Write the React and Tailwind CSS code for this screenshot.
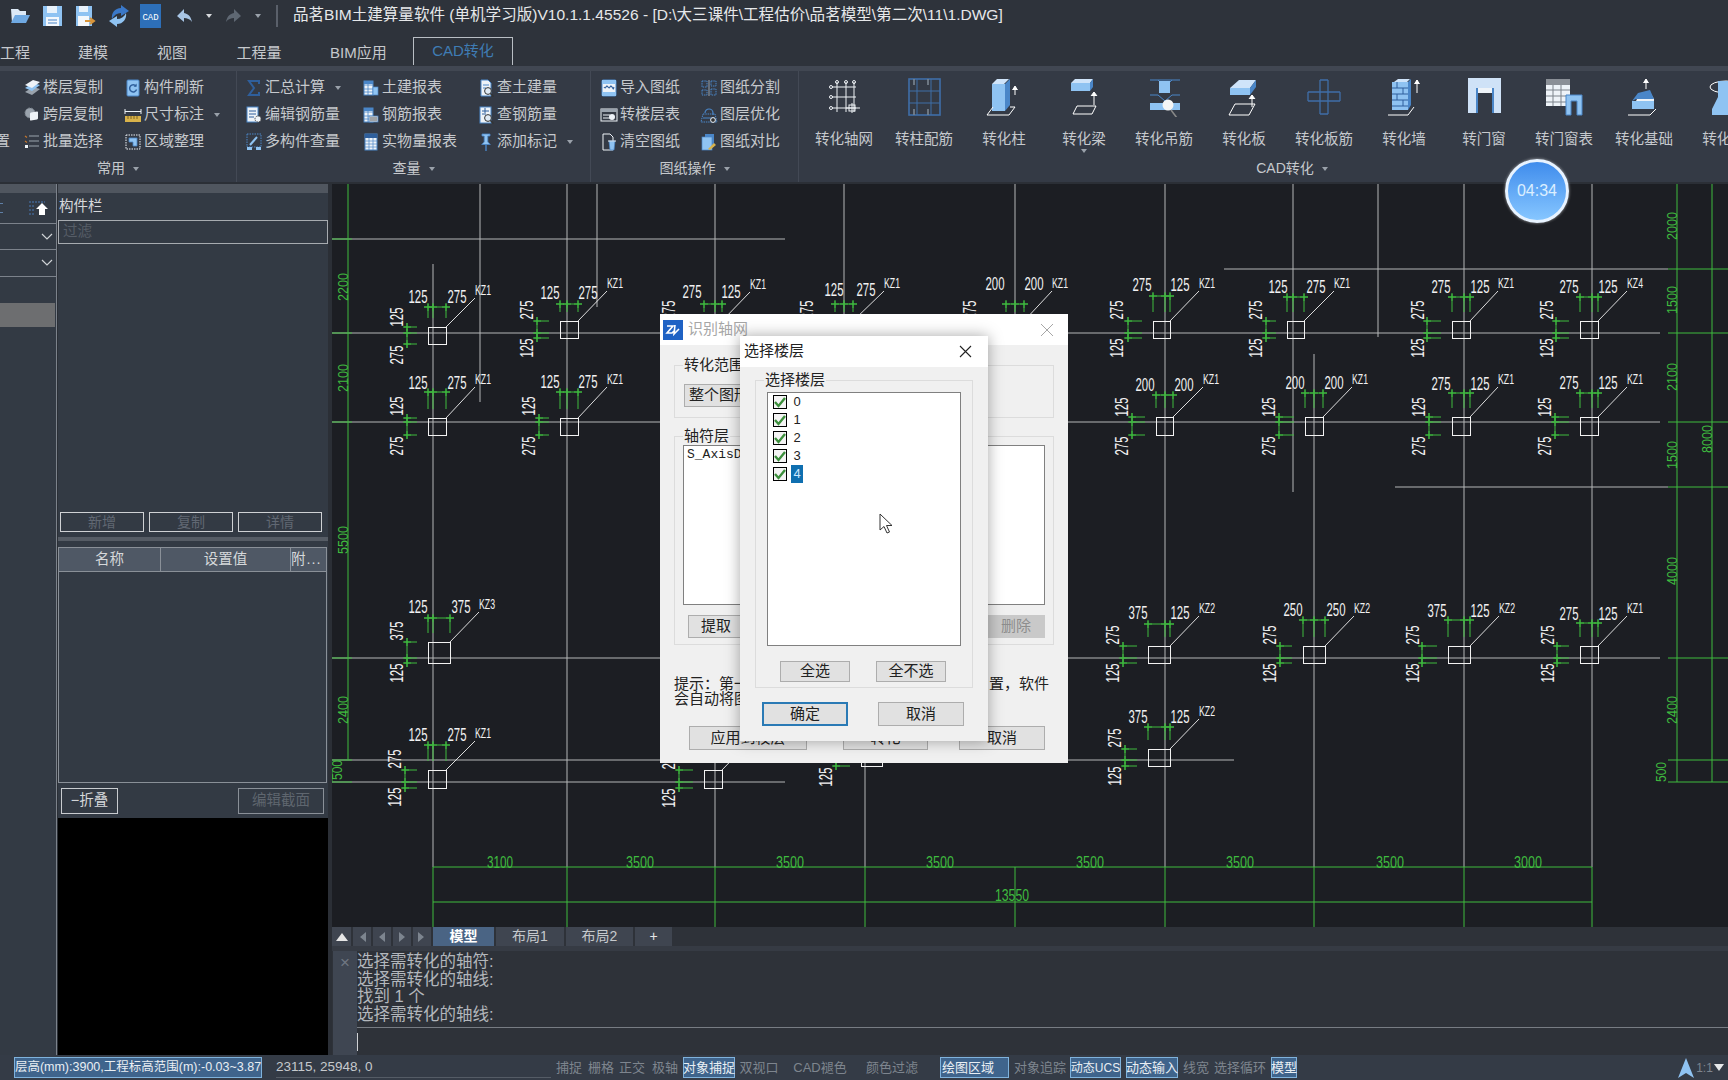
import React from "react";

/* ---------- small ribbon icons (18x18) ---------- */
const S = ({ children }) => (
  <svg width="18" height="18" viewBox="0 0 18 18" className="shrink-0">{children}</svg>
);
const L = "#8fc3f2", M = "#4a86c8", D = "#2f5f9c", W = "#eef3f8", Y = "#d8b24a", G = "#9aa3ad";
const Doc = () => <path d="M4 1h7l3 3v13H4z" fill={W} stroke={M} strokeWidth="1" />;
const Mag = () => (<g><circle cx="11" cy="12" r="3.4" fill="#dfeaf5" stroke="#333" strokeWidth="1" /><path d="M13.5 14.5l3 3" stroke="#333" strokeWidth="1.5" /></g>);
const Tbl = () => (<g><rect x="2" y="2" width="9" height="14" fill={W} stroke={M} /><path d="M2 6h9M2 10h9M2 13h9M6 2v14" stroke={M} strokeWidth=".8" /><rect x="2" y="2" width="9" height="3" fill={M} /></g>);
const icons = {
  floorCopy: <g><path d="M2 13l8-5 7 2-8 6z" fill={G} /><path d="M2 9l8-5 7 2-8 6z" fill={L} /><path d="M2 6l8-5 7 2-8 6z" fill={W} /></g>,
  refresh: <g><rect x="3" y="1" width="12" height="16" rx="1" fill={L} stroke={M} /><path d="M12 7a3.6 3.6 0 1 0 .6 3.6" fill="none" stroke={D} strokeWidth="1.5" /><path d="M12.6 4.5v3.2H9.6z" fill={D} /></g>,
  crossCopy: <g><circle cx="7" cy="7" r="5" fill={G} stroke="#7a828c" strokeDasharray="2 1" /><rect x="7" y="8" width="8" height="8" rx="1" fill={W} transform="skewY(-10)" /></g>,
  dim: <g><path d="M1 3v5M17 3v5M1 5.5h16" stroke={W} strokeWidth="1" /><rect x="1" y="10" width="16" height="6" fill={Y} /><path d="M4 10v3M7 10v3M10 10v3M13 10v3" stroke="#6b5218" strokeWidth=".8" /></g>,
  batch: <g><path d="M6 3h10M6 8h10M6 13h10" stroke={G} strokeWidth="1.2" /><path d="M2 3l2 1.5M2 8l2 1.5" stroke="#c4762e" strokeWidth="1.2" /><rect x="2" y="12" width="3" height="3" fill={W} /></g>,
  area: <g><rect x="2" y="2" width="14" height="14" fill="none" stroke={W} strokeDasharray="1.5 1" /><path d="M5 5h8v8h-4V9H5z" fill={L} stroke={M} strokeWidth=".8" /></g>,
  sum: <path d="M14 5V2H4l5 7-5 7h10v-3" fill="none" stroke={D} strokeWidth="2" />,
  editRebar: <g><rect x="2" y="1" width="11" height="15" fill={W} stroke={M} /><path d="M4 5h7M4 8h7M4 11h5" stroke={D} /><circle cx="13" cy="13" r="3" fill={W} stroke="#444" strokeDasharray="1.4 .8" /></g>,
  civilReport: <g><Tbl /><rect x="11" y="8" width="5" height="8" fill={L} stroke={M} strokeWidth=".7" /></g>,
  query: <g><Doc /><path d="M6 6h6M6 9h3" stroke={M} /><Mag /></g>,
  rebarReport: <g><Tbl /><rect x="7" y="10" width="9" height="6" fill="#c8ccd2" stroke={M} strokeWidth=".7" /><path d="M8 12h7M8 14h7" stroke="#555" strokeWidth=".7" /></g>,
  queryRebar: <g><rect x="3" y="1" width="11" height="16" fill={W} stroke={M} /><path d="M5 5h7M5 8h4M8 2v5" stroke={D} /><Mag /></g>,
  multi: <g><rect x="2" y="1" width="14" height="13" fill="none" stroke={M} strokeDasharray="1.5 1" /><path d="M5 12l7-8" stroke={L} strokeWidth="2" /><rect x="2" y="14" width="5" height="3" fill={L} /><rect x="11" y="14" width="5" height="3" fill={L} /></g>,
  realReport: <g><rect x="3" y="1" width="12" height="16" fill={W} stroke={M} /><rect x="3" y="1" width="12" height="4" fill={D} /><path d="M3 8h12M3 11h12M3 14h12M7 5v12M11 5v12" stroke={M} strokeWidth=".7" /></g>,
  pin: <g><path d="M5 1h8v2h-2.2v6l2.5 2.5H4.7L7.2 9V3H5z" fill={L} stroke={M} strokeWidth=".8" /><path d="M9 11v7" stroke={M} strokeWidth="1.4" /></g>,
  importDwg: <g><rect x="2" y="1" width="14" height="16" rx="1" fill={W} stroke={M} /><rect x="2" y="1" width="14" height="4" fill={L} /><path d="M4 8c2 3 2-3 4 0s2-3 4 0 1 2 2 0" fill="none" stroke={D} strokeWidth="1.2" /><rect x="2" y="13" width="14" height="4" fill={L} /></g>,
  toFloor: <g><rect x="1" y="3" width="16" height="12" fill="none" stroke={W} /><rect x="1" y="3" width="16" height="3" fill={G} /><path d="M3 9h7M3 12h7" stroke={W} /><circle cx="12" cy="11" r="3" fill={W} /></g>,
  clear: <g><path d="M3 1h7l3 3v13H3z" fill="none" stroke={W} /><path d="M9 8h6l-1 9H10z" fill={L} stroke={M} strokeWidth=".7" /><path d="M8 8h8" stroke={W} /></g>,
  split: <g><path d="M2 2h5v6H2zM11 2h5v5h-5zM2 11h5v5H2zM11 10h5v6h-5z" fill="none" stroke={M} strokeDasharray="1.5 .8" /><path d="M9 1v16" stroke={G} /></g>,
  layer: <g><path d="M5 7a4 4 0 0 1 8 0v2" fill="none" stroke={M} strokeWidth="1.2" /><path d="M3 8h12l2 8H1z" fill="none" stroke={M} strokeDasharray="1.5 .8" /><path d="M3 12h12" stroke={M} /><circle cx="13" cy="14" r="2.4" fill="#333" stroke={W} /></g>,
  compare: <g><rect x="5" y="1" width="9" height="13" fill={M} /><rect x="2" y="4" width="10" height="13" fill={L} stroke={M} strokeWidth=".7" /><path d="M8 16l6-6 2 2-6 5z" fill={Y} /></g>,
};
const Ic = ({ k }) => <S>{icons[k]}</S>;

/* ---------- large ribbon icons (40x40) ---------- */
const big = {
  grid: <g stroke="#eef2f6" fill="none"><path d="M8 10h24M8 20h24M8 31h24M13 5v30M22 5v30M30 5v30" /><circle cx="13" cy="5" r="1.5" /><circle cx="22" cy="5" r="1.5" /><circle cx="30" cy="5" r="1.5" /><circle cx="7" cy="10" r="1.5" /><circle cx="7" cy="20" r="1.5" /><circle cx="7" cy="31" r="1.5" /><rect x="25" y="28" width="6" height="6" /><path d="M22 31h14M28 26v10" /></g>,
  colRebar: <g fill="none" stroke="#3f6ea8" strokeWidth="1.6"><rect x="5" y="2" width="31" height="36" /><path d="M5 14h31M5 26h31M13 2v36M27 2v36" strokeWidth="1" /><path d="M10 2v6M24 2v6M10 38v-6M24 38v-6" stroke="#7c8792" /></g>,
  col: <g><path d="M8 7l5-5h12l-5 5z" fill="#cfe4fa" /><rect x="8" y="7" width="13" height="27" fill={L} /><path d="M21 7l5-5v26l-5 6z" fill={M} /><path d="M31 18v-8M28.5 13l2.5-4 2.5 4" stroke="#fff" fill="#fff" /><path d="M3 38h22l6-8H26" fill="none" stroke="#fff" /><path d="M3 38l6-8" stroke="#fff" /></g>,
  beam: <g><path d="M7 6l4-4h18l-3 4z" fill="#cfe4fa" /><rect x="7" y="6" width="19" height="8" fill={L} /><path d="M26 6l3-4v8l-3 4z" fill={M} /><path d="M30 28V16M27 19l3-4 3 4" stroke="#fff" fill="#fff" /><path d="M9 37l4-8h19l-4 8z" fill="none" stroke="#fff" /></g>,
  hanger: <g><path d="M6 3h30M14 3l4 4M28 3l-4 4" stroke="#4a86c8" fill="none" /><rect x="15" y="4" width="11" height="12" fill={L} /><path d="M6 18h8l7 6 7-6h8" stroke="#4a86c8" fill="none" /><rect x="6" y="26" width="30" height="7" fill={L} /><circle cx="24" cy="28" r="5.5" fill="#f5f5f5" /><path d="M27 33l6 8" stroke="#888" strokeWidth="1.6" /></g>,
  slab: <g><path d="M6 11l9-8h17l-6 8z" fill="#cfe4fa" /><path d="M6 11h20v7H6z" fill={L} /><path d="M26 11l6-8v7l-6 8z" fill={M} /><path d="M28 30V18M25 22l3-4 3 4" stroke="#fff" fill="#fff" /><path d="M5 38l6-11h20l-6 11z" fill="none" stroke="#fff" /></g>,
  slabRebar: <g fill="none" stroke="#3f6ea8" strokeWidth="1.3"><path d="M16 3v34M24 3v34M4 15h32M4 24h32" /><path d="M16 3h8M16 37h8M4 15v9M36 15v9" /></g>,
  wall: <g><path d="M10 5l4-3h12l-3 3z" fill="#cfe4fa" /><rect x="8" y="5" width="16" height="28" fill={L} /><path d="M8 11h16M8 17h16M8 23h16M8 29h16M13 5v6M19 11v6M13 17v6M19 23v6" stroke={D} strokeWidth="1" /><path d="M24 5l3-3v26l-3 5z" fill={M} /><path d="M33 16V3M30.5 7L33 3l2.5 4" stroke="#fff" fill="#fff" /><path d="M4 38h20l6-8" fill="none" stroke="#fff" /></g>,
  door: <g><path d="M4 1h33v35h-8V11H13v25H4z" fill="#cfe2f7" /><path d="M13 11h16v5H13z" fill={W} /><path d="M13 11v25M29 11v25" stroke={M} strokeWidth="2" /></g>,
  doorTable: <g><rect x="2" y="2" width="24" height="27" fill={W} /><rect x="2" y="2" width="24" height="6" fill="#8a8f96" /><path d="M2 13h24M2 19h24M2 25h24M9 8v21M17 8v21" stroke="#7d838b" /><path d="M22 18h16v20h-5V24h-6v14h-5z" fill={L} stroke={M} /></g>,
  found: <g><path d="M10 28l5-10 10-4 5 8v8H10z" fill={W} /><path d="M8 24l6-8 12-3 4 9H12z" fill={M} /><rect x="8" y="24" width="22" height="8" fill={L} /><path d="M22 12V2M19.5 6L22 2l2.5 4" stroke="#fff" fill="#fff" /><path d="M4 38h22l6-6" fill="none" stroke="#fff" /></g>,
  other: <g><ellipse cx="22" cy="10" rx="16" ry="6" fill="none" stroke="#fff" /><path d="M14 4h16v16l6 12v6H8v-6l6-12z" fill={L} /></g>,
};

/* ---------- CAD drawing data (page coordinates) ---------- */
const cols = [
  [428,327,18,17,433,333,307,407,397,"125",418,297,"275",457,297,"KZ1",483,290,"125",317,"275",355],
  [560,321,18,17,567,333,304,537,527,"125",550,293,"275",588,293,"KZ1",615,283,"275",310,"125",348],
  [428,418,18,17,433,422,392,407,397,"125",418,383,"275",457,383,"KZ1",483,379,"125",406,"275",446],
  [560,418,18,17,567,422,392,539,529,"125",550,382,"275",588,382,"KZ1",615,379,"125",406,"275",446],
  [428,642,22,21,433,658,618,407,397,"125",418,607,"375",461,607,"KZ3",487,604,"375",631,"125",673],
  [428,770,18,18,433,782,745,405,395,"125",418,735,"275",457,735,"KZ1",483,733,"275",759,"125",797],
  [704,770,18,18,715,782,745,679,669,"275",692,735,"125",731,735,"KZ1",758,733,"275",760,"125",798],
  [861,745,21,21,865,760,725,836,826,"125",853,715,"275",892,715,"KZ1",918,708,"275",738,"125",777],
  [704,321,18,17,715,333,304,679,669,"275",692,292,"125",731,292,"KZ1",758,284,"275",310,"125",348],
  [835,321,18,17,844,333,304,817,807,"125",834,290,"275",866,290,"KZ1",892,283,"275",310,"125",348],
  [1006,321,18,17,1015,333,304,980,970,"200",995,284,"200",1034,284,"KZ1",1060,283,"275",310,"125",348],
  [1153,321,17,17,1165,333,296,1128,1117,"275",1142,285,"125",1180,285,"KZ1",1207,283,"275",310,"125",348],
  [1287,321,17,17,1293,333,297,1266,1256,"125",1278,287,"275",1316,287,"KZ1",1342,283,"275",310,"125",348],
  [1452,321,18,17,1464,333,297,1427,1418,"275",1441,287,"125",1480,287,"KZ1",1506,283,"275",310,"125",348],
  [1580,321,18,17,1592,333,297,1556,1547,"275",1569,287,"125",1608,287,"KZ4",1635,283,"275",310,"125",348],
  [1156,417,17,18,1165,422,395,1132,1122,"200",1145,385,"200",1184,385,"KZ1",1211,379,"125",407,"275",446],
  [1305,417,18,18,1314,422,393,1279,1269,"200",1295,383,"200",1334,383,"KZ1",1360,379,"125",407,"275",446],
  [1452,417,18,18,1464,422,393,1429,1419,"275",1441,384,"125",1480,384,"KZ1",1506,379,"125",407,"275",446],
  [1580,417,18,18,1592,422,393,1555,1545,"275",1569,383,"125",1608,383,"KZ1",1635,379,"125",407,"275",446],
  [1148,646,22,17,1165,658,624,1123,1113,"375",1138,613,"125",1180,613,"KZ2",1207,608,"275",635,"125",673],
  [1303,646,22,17,1314,658,620,1280,1270,"250",1293,610,"250",1336,610,"KZ2",1362,608,"275",635,"125",673],
  [1448,646,22,17,1464,658,620,1422,1413,"375",1437,611,"125",1480,611,"KZ2",1507,608,"275",635,"125",673],
  [1580,646,18,17,1592,658,623,1557,1548,"275",1569,614,"125",1608,614,"KZ1",1635,608,"275",635,"125",673],
  [1148,749,22,17,1165,760,727,1125,1115,"375",1138,717,"125",1180,717,"KZ2",1207,711,"275",738,"125",776],
];
const GREEN = "#3fbb3f";
const TXT = ({ x, y, len, size, fill, rot, children }) => (
  <text x={x} y={y} textAnchor="middle" dominantBaseline="central" textLength={len} lengthAdjust="spacingAndGlyphs"
    fontSize={size} fill={fill} fontFamily="Liberation Sans, sans-serif" transform={rot ? `rotate(-90 ${x} ${y})` : undefined}>{children}</text>
);
const Tick = ({ x, y }) => <path d={`M${x - 4} ${y}h8M${x} ${y - 4}v8`} stroke={GREEN} strokeWidth="1" />;

function Column({ d }) {
  const [sx, sy, sw, sh, ax, ay, ty, lx, ltx, t1, t1x, t1y, t2, t2x, t2y, kz, kx, ky, l1, l1y, l2, l2y] = d;
  const xs = [sx, ax, sx + sw], ys = [sy, ay, sy + sh];
  return (
    <g>
      <path d={`M${sx - 4} ${ty}H${sx + sw + 4}`} stroke={GREEN} />
      {xs.map((x) => <path key={x} d={`M${x} ${ty - 3}V${sy - 9}`} stroke={GREEN} />)}
      {xs.map((x) => <Tick key={x} x={x} y={ty} />)}
      <path d={`M${lx} ${sy - 4}V${sy + sh + 4}`} stroke={GREEN} />
      {ys.map((y) => <path key={y} d={`M${lx - 3} ${y}H${sx - 11}`} stroke={GREEN} />)}
      {ys.map((y) => <Tick key={y} x={lx} y={y} />)}
      <rect x={sx + 0.5} y={sy + 0.5} width={sw} height={sh} fill="none" stroke="#f2f2f2" strokeWidth="1" />
      <path d={`M${sx + sw} ${sy}L${kx - 8} ${ky + 8}`} stroke="#f2f2f2" strokeWidth=".9" />
      <TXT x={t1x} y={t1y} len={19} size={18} fill="#f2f2f2">{t1}</TXT>
      <TXT x={t2x} y={t2y} len={19} size={18} fill="#f2f2f2">{t2}</TXT>
      <TXT x={kx} y={ky} len={16} size={14} fill="#f2f2f2">{kz}</TXT>
      <TXT x={ltx} y={l1y} len={19} size={18} fill="#f2f2f2" rot>{l1}</TXT>
      <TXT x={ltx} y={l2y} len={19} size={18} fill="#f2f2f2" rot>{l2}</TXT>
    </g>
  );
}

function Drawing() {
  const gray = ["M332 239H785","M332 333H1660","M332 422H1660","M332 658H1660","M332 760H1234","M332 782H785","M1224 269H1668","M1395 487H1668",
    "M433 264V867","M480 184V402","M567 184V867","M597 184V307","M715 184V867","M844 184V400","M865 740V867","M1015 184V400","M1165 184V867","M1293 184V492","M1314 354V867","M1378 184V337","M1464 184V867","M1592 184V867"];
  const greens = ["M348 184V760","M1677 184V782","M1712 184V782","M433 867H1592","M433 902H1592",
    "M433 867V927","M567 867V927","M715 867V927","M865 867V927","M1015 867V927","M1165 867V927","M1314 867V927","M1464 867V927","M1592 867V927",
    "M332 239H352","M332 333H352","M332 422H352","M332 658H352","M332 760H352","M332 782H352","M332 770V782",
    "M1668 269H1728","M1668 333H1728","M1668 422H1728","M1668 487H1728","M1668 658H1728","M1668 760H1728","M1668 782H1728"];
  const hDims = [["3100",500,862,26],["3500",640,862,28],["3500",790,862,28],["3500",940,862,28],["3500",1090,862,28],["3500",1240,862,28],["3500",1390,862,28],["3000",1528,862,28],["13550",1012,895,34]];
  const vDims = [["2200",342,287],["2100",342,378],["5500",342,540],["2400",342,710],["2000",1671,226],["1500",1671,300],["2100",1671,377],["1500",1671,455],["4000",1671,571],["2400",1671,710],["8000",1706,439]];
  return (
    <svg viewBox="332 184 1396 743" width="1396" height="743" className="block shrink-0">
      <rect x="332" y="184" width="1396" height="743" fill="#1c1e23" />
      {gray.map((p) => <path key={p} d={p} stroke="#b4b6b8" strokeWidth="1" fill="none" />)}
      {greens.map((p) => <path key={p} d={p} stroke={GREEN} strokeWidth="1" fill="none" />)}
      {hDims.map(([t, x, y, l]) => <TXT key={x} x={x} y={y} len={l} size={16} fill={GREEN}>{t}</TXT>)}
      {vDims.map(([t, x, y]) => <TXT key={x + "" + y} x={x} y={y} len={28} size={15} fill={GREEN} rot>{t}</TXT>)}
      <TXT x={1660} y={772} len={20} size={15} fill={GREEN} rot>500</TXT>
      <TXT x={336} y={770} len={20} size={15} fill={GREEN} rot>500</TXT>
      {cols.map((d, i) => <Column key={i} d={d} />)}
    </svg>
  );
}

/* ---------- ribbon ---------- */
const Caret = ({ cls = "" }) => <span className={"inline-block w-0 h-0 border-x-[3px] border-x-transparent border-t-[4px] border-t-[#9aa1aa] " + cls} />;

function Item({ k, t, caret }) {
  return (
    <div className="h-[27px] flex items-center whitespace-nowrap text-[15px] text-[#c6c9cd]">
      <span className="w-[20px] flex justify-start"><Ic k={k} /></span>
      <span>{t}</span>
      {caret && <Caret cls="ml-[10px]" />}
    </div>
  );
}
const Foot = ({ children }) => (
  <div className="h-[27px] flex items-center justify-center gap-[8px] text-[14px] text-[#c6c9cd]">
    {children}<Caret />
  </div>
);
const bigs = [["grid","转化轴网"],["colRebar","转柱配筋"],["col","转化柱"],["beam","转化梁"],["hanger","转化吊筋"],["slab","转化板"],["slabRebar","转化板筋"],["wall","转化墙"],["door","转门窗"],["doorTable","转门窗表"],["found","转化基础"],["other","转化…"]];

function Ribbon() {
  return (
    <div className="h-[113px] shrink-0 flex bg-[#343a45] border-b-[2px] border-[#2b2f36] overflow-hidden">
      <section className="w-[237px] shrink-0 flex flex-col border-r border-[#434955]">
        <div className="flex-1 pt-[3px] grid grid-cols-[23px_101px_113px] content-start">
          <span />
          <Item k="floorCopy" t="楼层复制" />
          <Item k="refresh" t="构件刷新" />
          <span />
          <Item k="crossCopy" t="跨层复制" />
          <Item k="dim" t="尺寸标注" caret />
          <span className="h-[27px] flex items-center -ml-[5px] text-[15px] text-[#c6c9cd]">置</span>
          <Item k="batch" t="批量选择" />
          <Item k="area" t="区域整理" />
        </div>
        <Foot>常用</Foot>
      </section>
      <section className="w-[354px] shrink-0 flex flex-col border-r border-[#434955]">
        <div className="flex-1 pt-[3px] pl-[8px] grid grid-cols-[117px_115px_1fr] content-start">
          <Item k="sum" t="汇总计算" caret />
          <Item k="civilReport" t="土建报表" />
          <Item k="query" t="查土建量" />
          <Item k="editRebar" t="编辑钢筋量" />
          <Item k="rebarReport" t="钢筋报表" />
          <Item k="queryRebar" t="查钢筋量" />
          <Item k="multi" t="多构件查量" />
          <Item k="realReport" t="实物量报表" />
          <Item k="pin" t="添加标记" caret />
        </div>
        <Foot>查量</Foot>
      </section>
      <section className="w-[208px] shrink-0 flex flex-col border-r border-[#434955]">
        <div className="flex-1 pt-[3px] pl-[9px] grid grid-cols-[100px_1fr] content-start">
          <Item k="importDwg" t="导入图纸" />
          <Item k="split" t="图纸分割" />
          <Item k="toFloor" t="转楼层表" />
          <Item k="layer" t="图层优化" />
          <Item k="clear" t="清空图纸" />
          <Item k="compare" t="图纸对比" />
        </div>
        <Foot>图纸操作</Foot>
      </section>
      <section className="w-[986px] shrink-0 flex flex-col">
        <div className="flex-1 flex pl-[5px] pt-[6px]">
          {bigs.map(([k, t]) => (
            <div key={k} className="w-[80px] shrink-0 flex flex-col items-center">
              <svg width="40" height="40" viewBox="0 0 40 40">{big[k]}</svg>
              <span className="mt-[12px] h-[20px] leading-[20px] text-[14.5px] text-[#c6c9cd] whitespace-nowrap">{t}</span>
              {k === "beam" && <Caret />}
            </div>
          ))}
        </div>
        <Foot>CAD转化</Foot>
      </section>
    </div>
  );
}

function TopBar() {
  return (
    <div className="h-[32px] shrink-0 flex items-center bg-[#2e333b]">
      <div className="w-[293px] shrink-0 flex items-center pl-[10px]">
        <svg width="20" height="20" viewBox="0 0 20 20"><path d="M1 3h7l2 2h6v4H6L2 17z" fill="#dce9f6" /><path d="M5 9h15l-4 8H1z" fill="#6fa9e2" /></svg>
        <svg className="ml-[12px]" width="21" height="22" viewBox="0 0 21 22"><path d="M1 1h19v20H1z" fill="#8fc3f2" /><rect x="5" y="1" width="10" height="7" fill="#e8f2fb" /><rect x="4" y="12" width="13" height="9" fill="#f4f8fc" /><path d="M6 15h9M6 18h9" stroke="#4a86c8" /></svg>
        <svg className="ml-[12px]" width="21" height="22" viewBox="0 0 21 22"><path d="M1 1h16v20H1z" fill="#8fc3f2" /><rect x="4" y="1" width="9" height="6" fill="#e8f2fb" /><rect x="3" y="11" width="11" height="10" fill="#f4f8fc" /><path d="M10 16h8M15 13l4 3-4 3" stroke="#d8953a" strokeWidth="2" fill="none" /></svg>
        <svg className="ml-[12px]" width="22" height="24" viewBox="0 0 22 24"><path d="M13 1l8 6-8 5V9C9 9 6 11 4 15 3 9 7 4 13 4z" fill="#3a78c8" /><path d="M9 23l-8-6 8-5v3c4 0 7-2 9-6 1 6-3 11-9 11z" fill="#8fc3f2" /></svg>
        <svg className="ml-[10px]" width="21" height="24" viewBox="0 0 21 24"><rect width="21" height="24" fill="#2d6fb8" /><text x="10.5" y="16" textAnchor="middle" fontSize="9" fill="#fff" fontFamily="Liberation Mono, monospace">CAD</text></svg>
        <svg className="ml-[15px]" width="17" height="18" viewBox="0 0 17 18"><path d="M8 2L1 9l7 6v-4c3 0 6 1 8 4-1-5-3-8-8-9z" fill="#a8c6e6" /></svg>
        <Caret cls="ml-[13px] border-t-[#d8dadd]" />
        <svg className="ml-[13px]" width="17" height="18" viewBox="0 0 17 18"><path d="M9 2l7 7-7 6v-4c-3 0-6 1-8 4 1-5 3-8 8-9z" fill="#5f6873" /></svg>
        <Caret cls="ml-[13px]" />
        <span className="ml-[15px] w-[2px] h-[22px] bg-[#5a606a]" />
      </div>
      <span className="-mt-[2px] text-[15.55px] text-[#e6e8ea] whitespace-nowrap">品茗BIM土建算量软件 (单机学习版)V10.1.1.45526 - [D:\大三课件\工程估价\品茗模型\第二次\11\1.DWG]</span>
    </div>
  );
}

function Tabs() {
  return (
    <div className="h-[34px] shrink-0 bg-[#2e333b] flex items-end text-[15px] text-[#c6c9cd]">
      <div className="flex items-center h-[25px] whitespace-nowrap">
        <span className="w-[30px] text-center">工程</span>
        <span className="ml-[48px] w-[30px] text-center">建模</span>
        <span className="ml-[49px] w-[30px] text-center">视图</span>
        <span className="ml-[48px] w-[48px] text-center">工程量</span>
        <span className="ml-[47px] w-[56px] text-center">BIM应用</span>
      </div>
      <span className="ml-[27px] w-[100px] h-[28px] border border-b-0 border-[#b9bec4] flex items-center justify-center text-[#3f7cb4] mb-[1px]">CAD转化</span>
    </div>
  );
}

/* ---------- left side ---------- */
const Chevron = () => <svg width="12" height="8" viewBox="0 0 12 8"><path d="M1 1l5 5 5-5" fill="none" stroke="#d0d3d6" strokeWidth="1.2" /></svg>;
const Head = () => <div className="h-[9px] bg-[#50565f]" />;

function LeftPanels() {
  return (
    <div className="w-[328px] shrink-0 flex bg-[#2b2f36]">
      <div className="w-[57px] shrink-0 flex flex-col bg-[#333a44] border-r border-[#7c828b]">
        <Head />
        <div className="h-[30px] flex items-center justify-between pl-0 pr-[8px]">
          <span className="w-[3px] h-[10px] border-y border-[#5f7fa6]" />
          <svg width="20" height="16" viewBox="0 0 20 16"><path d="M1 2h16M1 6h6M1 10h6M1 14h6" stroke="#4a78b5" strokeDasharray="2 1" /><path d="M15 3l6 6h-3v6h-6V9H9z" transform="translate(-1 0)" fill="#fff" /></svg>
        </div>
        <div className="h-[27px] border-y border-[#7c828b] flex items-center justify-end pr-[3px]"><Chevron /></div>
        <div className="h-[27px] border-b border-[#7c828b] flex items-center justify-end pr-[3px]"><Chevron /></div>
        <div className="mt-[26px] h-[24px] bg-[#6d6e70] mr-[1px]" />
      </div>
      <div className="w-[270px] shrink-0 ml-[1px] flex flex-col bg-[#333a44]">
        <Head />
        <div className="h-[27px] flex items-center pl-[1px] text-[14.5px] text-[#d6d8db]">构件栏</div>
        <div className="h-[24px] border border-[#a7abb0] flex items-center pl-[4px] text-[14.5px] text-[#565d67]">过滤</div>
        <div className="flex-[0_0_293px] flex gap-[5px] items-end pl-[2px] pb-[5px]">
          {["新增","复制","详情"].map((t) => (
            <span key={t} className="w-[84px] h-[20px] border border-[#cfd1d4] flex items-center justify-center text-[14px] text-[#616873]">{t}</span>
          ))}
        </div>
        <div className="h-[4px] bg-[#565c65]" />
        <div className="mt-[6px] h-[236px] border border-[#8a9098] mr-[1px]">
          <div className="h-[24px] flex bg-[#4f5865] border-b border-[#8a9098] text-[14.5px] text-[#d6d8db]">
            <span className="w-[102px] flex items-center justify-center border-r border-[#8a9098]">名称</span>
            <span className="w-[130px] flex items-center justify-center border-r border-[#8a9098]">设置值</span>
            <span className="flex-1 flex items-center tracking-[1px]">附...</span>
          </div>
        </div>
        <div className="h-[35px] flex items-center justify-between pl-[3px] pr-[4px] text-[14.5px]">
          <span className="w-[57px] h-[26px] border border-[#c9ccd0] flex items-center justify-center text-[#d6d8db]">−折叠</span>
          <span className="w-[86px] h-[26px] border border-[#8a9098] flex items-center justify-center text-[#5f666f]">编辑截面</span>
        </div>
        <div className="flex-1 bg-black" />
      </div>
    </div>
  );
}

/* ---------- bottom of canvas ---------- */
function LayoutTabs() {
  const Nav = ({ d }) => <span className="w-[18px] h-[19px] bg-[#3f4550] flex items-center justify-center"><svg width="10" height="12" viewBox="0 0 10 12"><path d={d} fill="#7d858f" /></svg></span>;
  return (
    <div className="h-[19px] shrink-0 flex bg-[#2e3239] gap-[2px] text-[14px] text-[#c6c9cd]">
      <span className="w-[19px] bg-[#3f4550] flex items-center justify-center"><span className="w-0 h-0 border-x-[6px] border-x-transparent border-b-[8px] border-b-[#e6e6e6]" /></span>
      <Nav d="M2 1v10M9 1L3 6l6 5z" />
      <Nav d="M8 1L2 6l6 5z" />
      <Nav d="M2 1l6 5-6 5z" />
      <Nav d="M8 1v10M1 1l6 5-6 5z" />
      <span className="w-[61px] bg-[#4a6484] font-bold text-white flex items-center justify-center">模型</span>
      <span className="w-[68px] bg-[#3f4550] flex items-center justify-center">布局1</span>
      <span className="w-[67px] bg-[#3f4550] flex items-center justify-center">布局2</span>
      <span className="w-[37px] bg-[#3f4550] flex items-center justify-center text-[#e6e6e6]">+</span>
    </div>
  );
}
function Command() {
  return (
    <div className="flex-1 flex bg-[#2e3239] border-t-[5px] border-[#363b44]">
      <div className="w-[24px] ml-[1px] bg-[#3f4652] flex justify-center pt-[2px] text-[#6f7782] text-[17px] leading-[20px]">×</div>
      <div className="flex-1 flex flex-col text-[16.5px] leading-[17.5px] text-[#b3b7bc]">
        <div className="h-[76px] pt-[2px]">
          <div>选择需转化的轴符:</div><div>选择需转化的轴线:</div><div>找到 1 个</div><div>选择需转化的轴线:</div>
        </div>
        <div className="flex-1 border-t border-[#777c83] flex items-center"><span className="w-px h-[18px] bg-[#cfd1d4]" /></div>
      </div>
    </div>
  );
}

function StatusBar() {
  const on = "h-[21px] bg-[#3f648c] border border-[#7fb2dc] flex items-center justify-center text-[#e9eef3] whitespace-nowrap";
  const off = "flex items-center justify-center text-[#7e858e] whitespace-nowrap";
  return (
    <div className="h-[25px] shrink-0 bg-[#343b46] flex items-center text-[13px]">
      <span className={on + " ml-[14px] w-[248px] text-[12.5px]"}>层高(mm):3900,工程标高范围(m):-0.03~3.87</span>
      <span className="ml-[14px] w-[275px] h-[21px] border-b border-[#555c66] flex items-center text-[#c6c9cd] text-[13.5px]">23115, 25948, 0</span>
      <span className={off + " ml-[3px] w-[30px]"}>捕捉</span>
      <span className={off + " ml-[2px] w-[30px]"}>栅格</span>
      <span className={off + " ml-[1px] w-[30px]"}>正交</span>
      <span className={off + " ml-[3px] w-[30px]"}>极轴</span>
      <span className={on + " ml-[3px] w-[52px]"}>对象捕捉</span>
      <span className={off + " ml-[2px] w-[44px]"}>双视口</span>
      <span className={off + " ml-[9px] w-[60px]"}>CAD褪色</span>
      <span className={off + " ml-[12px] w-[60px]"}>颜色过滤</span>
      <span className={on + " ml-[18px] w-[69px] justify-start pl-[1px]"}>绘图区域</span>
      <span className={off + " ml-[1px] w-[60px]"}>对象追踪</span>
      <span className={on + " w-[51px] text-[12px]"}>动态UCS</span>
      <span className={on + " ml-[5px] w-[52px]"}>动态输入</span>
      <span className={off + " ml-[3px] w-[30px]"}>线宽</span>
      <span className={off + " w-[58px]"}>选择循环</span>
      <span className={on + " ml-[2px] w-[26px]"}>模型</span>
      <svg className="ml-[380px] shrink-0" width="18" height="22" viewBox="0 0 18 22"><path d="M9 1l8 20-8-5-8 5z" fill="#8fc3f2" /></svg>
      <span className={off + " ml-[2px] w-[15px] text-[12px]"}>1:1</span>
      <span className="ml-[2px] w-0 h-0 border-x-[5px] border-x-transparent border-t-[7px] border-t-[#e6e8ea]" />
    </div>
  );
}

/* ---------- dialogs ---------- */
const Btn = ({ cls = "", tone = "bg-[#e1e1e1] border border-[#adadad] text-[#222]", children }) => (
  <span className={"flex items-center justify-center text-[15px] whitespace-nowrap " + tone + " " + cls}>{children}</span>
);
const Group = ({ cls = "", label, children }) => (
  <div className={"relative border border-[#dcdcdc] " + cls}>
    <span className="absolute -top-[10px] left-[8px] bg-[#f0f0f0] px-px text-[15px] leading-[18px] text-[#222] whitespace-nowrap">{label}</span>
    {children}
  </div>
);
function Check({ n, hi }) {
  return (
    <div className="h-[18px] flex items-center pl-[5px]">
      <span className="w-[14px] h-[14px] border border-black bg-[#f4f4f4] flex items-center justify-center">
        <svg width="12" height="12" viewBox="0 0 12 12"><path d="M1 6l3.5 4L11 2" fill="none" stroke="#3c8f3c" strokeWidth="2.4" /></svg>
      </span>
      <span className={"ml-[4px] w-[12px] h-[18px] flex items-center justify-center text-[13px] " + (hi ? "bg-[#0f6fb0] text-[#cbe7ff]" : "text-[#222]")}>{n}</span>
    </div>
  );
}
function OuterDialog() {
  return (
    <div className="absolute left-[660px] top-[314px] w-[408px] h-[449px] bg-[#f0f0f0] flex flex-col">
      <div className="h-[31px] bg-white flex items-center pl-[3px] pr-[14px]">
        <svg width="20" height="20" viewBox="0 0 20 20"><rect width="20" height="20" fill="#1f62c4" /><path d="M4 6h6L4 13h5l3-3M12 5l-1 9 5-5" fill="none" stroke="#fff" strokeWidth="1.6" /></svg>
        <span className="ml-[5px] text-[15px] text-[#a6a6a6]">识别轴网</span>
        <svg className="ml-auto" width="14" height="14" viewBox="0 0 14 14"><path d="M1 1l12 12M13 1L1 13" stroke="#a6a6a6" /></svg>
      </div>
      <div className="flex-1 px-[14px] pt-[20px] flex flex-col">
        <Group cls="h-[53px] pl-[9px] pt-[18px]" label="转化范围">
          <Btn cls="w-[110px] h-[23px] justify-start pl-[4px]">整个图形</Btn>
        </Group>
        <Group cls="mt-[18px] h-[209px] px-[8px] pt-[8px]" label="轴符层">
          <div className="h-[160px] bg-white border border-[#808080] pl-[3px] text-[13px] leading-[18px] text-[#222] font-['Liberation_Mono',monospace]">S_AxisD</div>
          <div className="mt-[10px] flex justify-between pl-[5px]">
            <Btn cls="w-[56px] h-[23px]">提取</Btn>
            <Btn tone="bg-[#c9c9c9] text-[#8d8d8d]" cls="w-[58px] h-[23px]">删除</Btn>
          </div>
        </Group>
        <div className="mt-[31px] text-[15px] leading-[15px] text-[#222] h-[30px]">
          <div className="flex justify-between pr-[5px]"><span>提示：第一</span><span>置，软件</span></div>
          <div>会自动将图</div>
        </div>
        <div className="mt-[20px] flex pl-[15px]">
          <Btn cls="w-[118px] h-[24px]">应用到校层</Btn>
          <Btn cls="ml-[36px] w-[85px] h-[24px]">转化</Btn>
          <Btn cls="ml-[31px] w-[86px] h-[24px]">取消</Btn>
        </div>
      </div>
    </div>
  );
}
function InnerDialog() {
  return (
    <div className="absolute left-[740px] top-[336px] w-[248px] h-[405px] bg-[#f0f0f0] shadow-[0_0_14px_rgba(0,0,0,0.35)] flex flex-col">
      <div className="h-[31px] bg-white flex items-center pl-[4px] pr-[16px] text-[15px] text-[#222]">
        <span>选择楼层</span>
        <svg className="ml-auto" width="13" height="13" viewBox="0 0 13 13"><path d="M1 1l11 11M12 1L1 12" stroke="#222" strokeWidth="1.1" /></svg>
      </div>
      <div className="px-[15px] pt-[13px]">
        <Group cls="h-[308px] px-[11px] pt-[11px]" label="选择楼层">
          <div className="h-[254px] bg-white border border-[#808080] relative">
            {["0","1","2","3","4"].map((n) => <Check key={n} n={n} hi={n === "4"} />)}
            <svg className="absolute left-[110px] top-[120px]" width="16" height="22" viewBox="0 0 16 22"><path d="M2 1v16l4-3.5 3 6.5 2.5-1-3-6.5 5.5 0z" fill="#fff" stroke="#333" strokeWidth="1" /></svg>
          </div>
          <div className="mt-[15px] flex pl-[13px] gap-[26px]">
            <Btn cls="w-[70px] h-[21px]">全选</Btn>
            <Btn cls="w-[70px] h-[21px]">全不选</Btn>
          </div>
        </Group>
        <div className="mt-[14px] flex pl-[7px] gap-[30px]">
          <Btn tone="bg-[#e1e1e1] border-[2px] border-[#2a7ab5] text-[#222]" cls="w-[86px] h-[24px]">确定</Btn>
          <Btn cls="w-[86px] h-[24px]">取消</Btn>
        </div>
      </div>
    </div>
  );
}

export default function App() {
  return (
    <div className="relative w-[1728px] h-[1080px] overflow-hidden bg-[#2b2f36] flex flex-col font-['Liberation_Sans','Noto_Sans_CJK_SC',sans-serif]">
      <TopBar />
      <Tabs />
      <div className="h-[5px] shrink-0 bg-[#414752]" />
      <Ribbon />
      <div className="flex-1 min-h-0 flex">
        <LeftPanels />
        <div className="w-[4px] shrink-0 bg-[#2b2f36]" />
        <div className="flex-1 flex flex-col min-w-0">
          <Drawing />
          <LayoutTabs />
          <Command />
        </div>
      </div>
      <StatusBar />
      <OuterDialog />
      <InnerDialog />
      <div className="absolute left-[1505px] top-[159px] w-[64px] h-[64px] rounded-full border-[3px] border-[#e8f3ff] bg-linear-to-b from-[#3f8cec] to-[#86c6ff] flex items-center justify-center text-[16px] text-[#dcefff] shadow-[0_0_3px_rgba(255,255,255,0.6)]">04:34</div>
    </div>
  );
}
